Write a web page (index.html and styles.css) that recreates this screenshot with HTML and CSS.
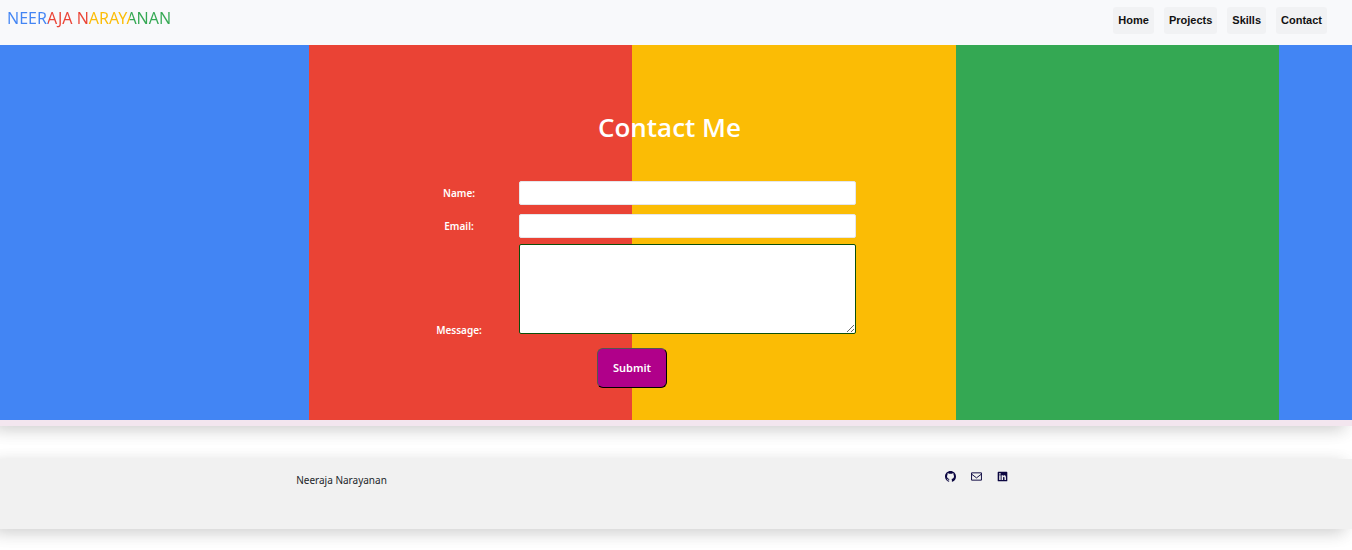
FILE: index.html
```html
<!DOCTYPE html>
<html lang="en">
<head>
<meta charset="utf-8">
<meta name="viewport" content="width=device-width, initial-scale=1">
<title>Neeraja Narayanan</title>
<link rel="stylesheet" href="styles.css">
</head>
<body>
<header class="site-header">
  <a class="brand" href="#home">NEERAJA NARAYANAN</a>
  <nav class="nav">
    <a class="nav-link" href="#home">Home</a>
    <a class="nav-link" href="#projects">Projects</a>
    <a class="nav-link" href="#skills">Skills</a>
    <a class="nav-link" href="#contact">Contact</a>
  </nav>
</header>
<main class="contact" id="contact">
  <div class="stripes">
    <h1 class="title">Contact Me</h1>
    <form class="form">
      <div class="row">
        <label class="label" for="name">Name:</label>
        <input class="field" id="name" type="text">
      </div>
      <div class="row">
        <label class="label" for="email">Email:</label>
        <input class="field" id="email" type="email">
      </div>
      <div class="row row-message">
        <label class="label" for="message">Message:</label>
        <textarea class="field message" id="message"></textarea>
      </div>
      <div class="actions">
        <button class="submit" type="submit">Submit</button>
      </div>
    </form>
  </div>
</main>
<footer class="footer">
  <div class="footer-cell"><p class="footer-name">Neeraja Narayanan</p></div>
  <div class="footer-cell social">
    <a class="social-link" href="#github" aria-label="GitHub">
      <svg class="icon" viewBox="0 0 16 16"><path fill="currentColor" d="M8 0C3.58 0 0 3.58 0 8c0 3.54 2.29 6.53 5.47 7.59.4.07.55-.17.55-.38v-1.49c-2.01.37-2.53-.49-2.69-.94-.09-.23-.48-.94-.82-1.13-.28-.15-.68-.52-.01-.53.63-.01 1.08.58 1.23.82.72 1.21 1.87.87 2.33.66.07-.52.28-.87.51-1.07-1.78-.2-3.64-.89-3.64-3.95 0-.87.31-1.59.82-2.15-.08-.2-.36-1.02.08-2.12 0 0 .67-.21 2.2.82a7.6 7.6 0 0 1 4 0c1.53-1.04 2.2-.82 2.2-.82.44 1.1.16 1.92.08 2.12.51.56.82 1.27.82 2.15 0 3.07-1.87 3.75-3.65 3.95.29.25.54.73.54 1.48v2.2c0 .21.15.46.55.38A8 8 0 0 0 16 8c0-4.42-3.58-8-8-8z"/></svg>
    </a>
    <a class="social-link" href="#email" aria-label="Email">
      <svg class="icon" viewBox="0 0 16 16"><path fill="none" stroke="currentColor" stroke-width="1.4" stroke-linejoin="round" d="M.8 2.7h14.4v10.6H.8zM.8 4.5 8 10l7.200-5.500"/></svg>
    </a>
    <a class="social-link" href="#linkedin" aria-label="LinkedIn">
      <svg class="icon" viewBox="0 0 16 16"><path fill="currentColor" fill-rule="evenodd" d="M2 1h12a1 1 0 0 1 1 1v12a1 1 0 0 1-1 1H2a1 1 0 0 1-1-1V2a1 1 0 0 1 1-1zM3.200 6.300V13h2.100V6.300zM4.250 3a1.200 1.200 0 1 0 0 2.400 1.200 1.200 0 0 0 0-2.400zM6.700 6.300V13h2.100V9.700c0-2 2.100-2 2.100 0V13H13V9.200c0-3.300-3-3.700-4.200-2v-.9z"/></svg>
    </a>
  </div>
</footer>
</body>
</html>
```
FILE: styles.css
```css
* { box-sizing: border-box; }

body {
  margin: 0;
  background: #fff;
  color: #212529;
  font-family: "Segoe UI", "Noto Sans", sans-serif;
  font-size: 10px;
  overflow-x: hidden;
}

.site-header {
  position: relative;
  display: flex;
  justify-content: space-between;
  align-items: flex-start;
  min-height: 45px;
  padding: 7px 25px 0 7px;
  background: #f8f9fb;
}

.brand {
  font-size: 16px;
  line-height: 22px;
  text-decoration: none;
  color: transparent;
  background: linear-gradient(90deg, #4285f4 25%, #ea4335 25% 50%, #fbbc05 50% 75%, #34a853 75%);
  -webkit-background-clip: text;
  background-clip: text;
}

.nav { display: flex; gap: 10px; }

.nav-link {
  padding: 0 5px;
  border-radius: 3px;
  background: #f1f2f4;
  color: #111;
  font: bold 11px/27px "Liberation Sans", Arial, sans-serif;
  text-decoration: none;
}

.contact {
  padding-bottom: 6px;
  background: #f3e6ef;
  box-shadow: -10px 4px 16px rgba(0, 0, 0, 0.1), -4px 4px 16px rgba(0, 0, 0, 0.1);
}

.stripes {
  padding: 63px 13px 32px 0;
  background: linear-gradient(90deg, #4285f4 25%, #ea4335 25% 50%, #fbbc05 50% 75%, #34a853 75%) -15px 0 / 1294px 100% repeat-x;
}

.title {
  margin: 0 0 35px;
  color: #fff;
  font-family: "Segoe UI", "Open Sans", sans-serif;
  font-size: 26px;
  font-weight: 600;
  line-height: 38px;
  text-align: center;
}

.form {
  width: 541px;
  max-width: 100%;
  margin: 0 auto;
}

.row {
  display: grid;
  grid-template-columns: 120px 1fr;
  align-items: center;
  margin-bottom: 9px;
  padding-right: 84px;
}

.label {
  color: #fff;
  font-weight: 600;
  line-height: 16px;
  text-align: center;
}

.field {
  width: 100%;
  height: 24px;
  border: 1px solid #e6e6ea;
  border-radius: 2px;
  background: #fff;
  font: inherit;
}

.row-message {
  align-items: end;
  margin: -3px 0 10px;
}

.message {
  display: block;
  height: 90px;
  margin-bottom: 4px;
  border-color: #0b4f0b;
}

.actions {
  display: flex;
  justify-content: center;
  padding-right: 75px;
}

.submit {
  padding: 0 15px;
  border: 1px outset #000;
  border-radius: 6px;
  background: #b0008a;
  color: #fff;
  font: 600 11px/38px "Segoe UI", "Noto Sans", sans-serif;
}

.footer {
  display: grid;
  grid-template-columns: 1fr 1fr;
  min-height: 70px;
  margin: 33px 0 21px;
  padding: 10px 58px 0 24px;
  background: #f1f1f1;
  box-shadow: -10px 4px 16px rgba(0, 0, 0, 0.1), -4px 4px 16px rgba(0, 0, 0, 0.1);
}

.footer-cell { text-align: center; }

.footer-name {
  margin: 3px 0 0;
  line-height: 16px;
}

.social {
  display: flex;
  justify-content: center;
  align-items: flex-start;
  gap: 15px;
}

.social-link {
  display: flex;
  padding-top: 2px;
  color: #0b0640;
}

.icon { width: 11px; height: 11px; }
```
